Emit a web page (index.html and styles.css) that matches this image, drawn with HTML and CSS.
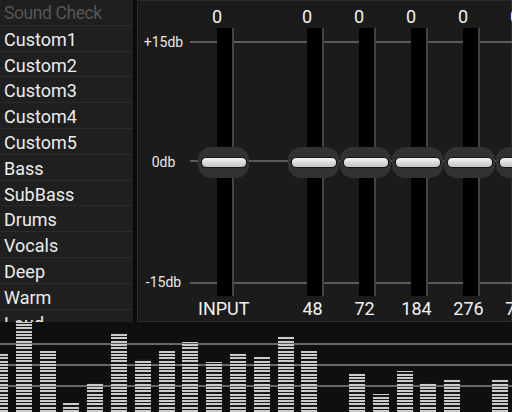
FILE: index.html
```html
<!DOCTYPE html>
<html>
<head>
<meta charset="utf-8">
<link rel="stylesheet" href="styles.css">
</head>
<body>
<div class="app">
  <div class="top">
    <ul class="presets">
      <li class="header">Sound Check</li>
      <li>Custom1</li>
      <li>Custom2</li>
      <li>Custom3</li>
      <li>Custom4</li>
      <li>Custom5</li>
      <li>Bass</li>
      <li>SubBass</li>
      <li>Drums</li>
      <li>Vocals</li>
      <li>Deep</li>
      <li>Warm</li>
      <li>Loud</li>
    </ul>
    <section class="eq">
      <div class="scale">
        <span>+15db</span>
        <span>0db</span>
        <span>-15db</span>
      </div>
      <div class="bands">
        <div class="band input">
          <div class="val">0</div>
          <div class="rail"><div class="track"></div><div class="knob"><div class="grip"></div></div></div>
          <div class="freq">INPUT</div>
        </div>
        <div class="band">
          <div class="val">0</div>
          <div class="rail"><div class="track"></div><div class="knob"><div class="grip"></div></div></div>
          <div class="freq">48</div>
        </div>
        <div class="band">
          <div class="val">0</div>
          <div class="rail"><div class="track"></div><div class="knob"><div class="grip"></div></div></div>
          <div class="freq">72</div>
        </div>
        <div class="band">
          <div class="val">0</div>
          <div class="rail"><div class="track"></div><div class="knob"><div class="grip"></div></div></div>
          <div class="freq">184</div>
        </div>
        <div class="band">
          <div class="val">0</div>
          <div class="rail"><div class="track"></div><div class="knob"><div class="grip"></div></div></div>
          <div class="freq">276</div>
        </div>
        <div class="band">
          <div class="val">0</div>
          <div class="rail"><div class="track"></div><div class="knob"><div class="grip"></div></div></div>
          <div class="freq">772</div>
        </div>
      </div>
    </section>
  </div>
  <div class="viz">
    <div class="bars">
      <div class="bar" style="height:59px"></div>
      <div class="bar" style="height:90px"></div>
      <div class="bar" style="height:61px"></div>
      <div class="bar" style="height:9px"></div>
      <div class="bar" style="height:29px"></div>
      <div class="bar" style="height:79px"></div>
      <div class="bar" style="height:53px"></div>
      <div class="bar" style="height:61px"></div>
      <div class="bar" style="height:70px"></div>
      <div class="bar" style="height:50px"></div>
      <div class="bar" style="height:59px"></div>
      <div class="bar" style="height:55px"></div>
      <div class="bar" style="height:76px"></div>
      <div class="bar" style="height:61px"></div>
      <div class="bar" style="height:0px"></div>
      <div class="bar" style="height:39px"></div>
      <div class="bar" style="height:18px"></div>
      <div class="bar" style="height:41px"></div>
      <div class="bar" style="height:29px"></div>
      <div class="bar" style="height:33px"></div>
      <div class="bar" style="height:0px"></div>
      <div class="bar" style="height:33px"></div>
    </div>
  </div>
</div>
</body>
</html>
```

FILE: styles.css
```css
* { box-sizing: border-box; }

html, body {
  margin: 0;
  padding: 0;
  background: #0e0e0e;
}

body {
  font-family: Roboto, "Liberation Sans", sans-serif;
  color: #ececec;
  width: 512px;
  height: 412px;
  overflow: hidden;
}

.app {
  display: flex;
  flex-direction: column;
  width: 512px;
  height: 412px;
}

.top {
  display: flex;
  gap: 4px;
  height: 322px;
  background: #0b0b0b;
  flex-shrink: 0;
}

/* preset list */
.presets {
  list-style: none;
  margin: 0;
  padding: 0;
  width: 133px;
  flex-shrink: 0;
  background: #1f1f1f;
  overflow: hidden;
}

.presets li {
  height: 25.8px;
  line-height: 24.8px;
  padding-top: 2px;
  border-bottom: 1px solid #2b2b2b;
  padding-left: 4px;
  font-size: 18px;
  color: #ececec;
  white-space: nowrap;
}

.presets li.header {
  color: #565656;
  font-size: 17.5px;
  letter-spacing: -0.4px;
  padding-top: 1px;
}

/* equalizer panel */
.eq {
  flex: 1;
  display: flex;
  background: #1b1b1b;
  box-shadow: inset 0 0 0 1px #2c2c2c;
  overflow: hidden;
}

.scale {
  width: 53px;
  flex-shrink: 0;
  padding-top: 28px;
  height: 296px;
  display: flex;
  flex-direction: column;
  justify-content: space-between;
}

.scale span {
  height: 28px;
  line-height: 28px;
  text-align: center;
  font-size: 14px;
  color: #e8e8e8;
}

.bands {
  flex: 1;
  display: flex;
  padding-left: 8px;
  background:
    linear-gradient(#5a5a5a, #5a5a5a) 0 41px / 100% 2px no-repeat,
    linear-gradient(#5a5a5a, #5a5a5a) 0 160px / 100% 2px no-repeat,
    linear-gradient(#5a5a5a, #5a5a5a) 0 282px / 100% 2px no-repeat;
}

.band {
  width: 52px;
  flex-shrink: 0;
  display: flex;
  flex-direction: column;
}

.band.input {
  margin-right: 38px;
}

.val {
  height: 28px;
  line-height: 33px;
  font-size: 18px;
  text-align: center;
  padding-right: 14px;
  color: #f2f2f2;
}

.rail {
  height: 268px;
  display: grid;
}

.track {
  grid-area: 1 / 1;
  justify-self: start;
  margin-left: 19px;
  width: 17px;
  height: 268px;
  background: #000;
  border-right: 2px solid #444;
}

.knob {
  grid-area: 1 / 1;
  justify-self: start;
  align-self: center;
  width: 51px;
  height: 31px;
  border-radius: 13px;
  background: #323232;
  display: flex;
  align-items: center;
  justify-content: center;
}

.grip {
  width: 46px;
  height: 11px;
  border: 1px solid #121212;
  border-radius: 5px;
  background: linear-gradient(#f4f4f4, #c2c2c2);
}

.freq {
  height: 26px;
  line-height: 25px;
  font-size: 18px;
  text-align: center;
  padding-right: 3px;
  color: #f2f2f2;
  white-space: nowrap;
}

/* visualizer */
.viz {
  height: 90px;
  flex-shrink: 0;
  overflow: hidden;
  background:
    linear-gradient(#686868, #686868) 0 21px / 100% 2px no-repeat,
    linear-gradient(#686868, #686868) 0 42px / 100% 2px no-repeat,
    linear-gradient(#686868, #686868) 0 63px / 100% 2px no-repeat,
    #0f0f0f;
}

.bars {
  display: flex;
  align-items: flex-end;
  gap: 7.8px;
  height: 90px;
  margin-left: -8px;
}

.bar {
  width: 16px;
  flex-shrink: 0;
  background: repeating-linear-gradient(to top, #cacaca 0 2px, rgba(40,40,40,0.35) 2px 3.3px);
}
```
